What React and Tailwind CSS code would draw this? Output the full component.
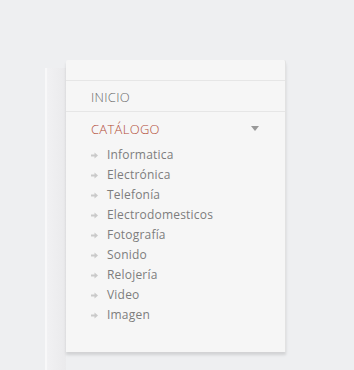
const items = [
  "Informatica",
  "Electrónica",
  "Telefonía",
  "Electrodomesticos",
  "Fotografía",
  "Sonido",
  "Relojería",
  "Video",
  "Imagen",
];

const Arrow = () => (
  <svg width="7" height="7" viewBox="0 0 7 7" className="shrink-0">
    <path d="M0 2.5h3.5V0.5L7 3.5 3.5 6.5V4.5H0z" fill="#cacaca" />
  </svg>
);

export default function App() {
  return (
    <div className="w-[354px] h-[370px] bg-[#eeeff1] overflow-hidden flex pt-[60px]">
      {/* left column strip */}
      <div className="w-[45px] shrink-0" />
      <div className="w-[21px] shrink-0 mt-[8px] bg-gradient-to-r from-[#f1f1f3] to-[#eaeaec] border-l-2 border-[#f8f8f9]" />

      <div className="w-[220px] h-[292px] bg-[#f6f6f6] border-r border-[#e2e2e2] rounded-t-[2px] shadow-[0_3px_3px_rgba(0,0,0,0.12)] font-['Open_Sans',sans-serif]">
        <div className="h-[21px] border-b border-[#e6e6e6]" />
        <div className="h-[31px] border-b border-[#e6e6e6] flex items-center pt-[3px] pl-[25px] text-[13px] font-light text-[#6a6a6a] tracking-[0.3px]">
          INICIO
        </div>
        <div className="h-[33px] flex items-center justify-between pt-[2px] pl-[25px] pr-[26px] text-[13px] font-light text-[#b24a35] tracking-[0.3px]">
          <span>CATÁLOGO</span>
          <svg width="8" height="5" viewBox="0 0 8 5" className="-mt-[2px]">
            <path d="M0 0h8L4 5z" fill="#999" />
          </svg>
        </div>
        <ul className="pl-[25px]">
          {items.map((item) => (
            <li key={item} className="h-[20px] flex items-center gap-[9px] text-[12px] text-[#7d7d7d] tracking-[0.2px]">
              <Arrow />
              <span>{item}</span>
            </li>
          ))}
        </ul>
      </div>
    </div>
  );
}
